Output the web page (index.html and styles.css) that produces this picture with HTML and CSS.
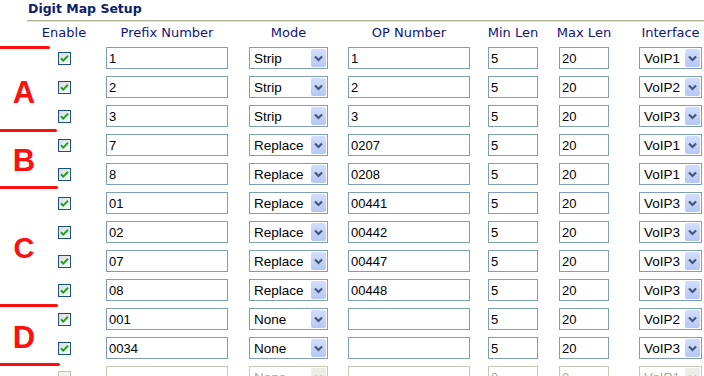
FILE: index.html
```html
<!DOCTYPE html>
<html lang="en">
<head>
    <meta charset="UTF-8">
    <meta name="viewport" content="width=device-width, initial-scale=1.0">
    <title>Digit Map Setup</title>
    <link rel="stylesheet" href="styles.css">
</head>
<body>
    <div class="page">
        <h2 class="title">Digit Map Setup</h2>

        <div class="head">
            <div>Enable</div>
            <div>Prefix Number</div>
            <div>Mode</div>
            <div>OP Number</div>
            <div>Min Len</div>
            <div>Max Len</div>
            <div class="last">Interface</div>
        </div>

        <div id="mapRows"></div>

        <!-- hand drawn notes over the table -->
        <div class="mark line1"></div>
        <div class="mark line2"></div>
        <div class="mark line3"></div>
        <div class="mark line4"></div>
        <div class="mark line5"></div>
        <div class="letter let-a">A</div>
        <div class="letter let-b">B</div>
        <div class="letter let-c">C</div>
        <div class="letter let-d">D</div>
    </div>

    <script>
        let rows = [
            ['1', 'Strip', '1', '5', '20', 'VoIP1'],
            ['2', 'Strip', '2', '5', '20', 'VoIP2'],
            ['3', 'Strip', '3', '5', '20', 'VoIP3'],
            ['7', 'Replace', '0207', '5', '20', 'VoIP1'],
            ['8', 'Replace', '0208', '5', '20', 'VoIP1'],
            ['01', 'Replace', '00441', '5', '20', 'VoIP3'],
            ['02', 'Replace', '00442', '5', '20', 'VoIP3'],
            ['07', 'Replace', '00447', '5', '20', 'VoIP3'],
            ['08', 'Replace', '00448', '5', '20', 'VoIP3'],
            ['001', 'None', '', '5', '20', 'VoIP2'],
            ['0034', 'None', '', '5', '20', 'VoIP3'],
            ['', 'None', '', '0', '0', 'VoIP1', true]
        ];

        let chevron = '<svg width="15" height="18" viewBox="0 0 15 18"><path d="M4 7.5 L7.5 11 L11 7.5" fill="none" stroke="currentColor" stroke-width="2.2"/></svg>';
        let tick = '<svg width="13" height="13" viewBox="0 0 13 13"><path d="M3 6.2 L5.2 8.6 L10 3.8" fill="none" stroke="#21a121" stroke-width="2"/></svg>';

        function sel(text, cls) {
            return `<div class="sel ${cls}"><span class="sel-text">${text}</span><span class="sel-btn">${chevron}</span></div>`;
        }

        let box = document.getElementById('mapRows');
        rows.forEach(r => {
            let off = r[6] ? ' off' : '';
            box.innerHTML += `<div class="row${off}">
                <div><span class="check">${r[6] ? '' : tick}</span></div>
                <div><input class="txt wide" type="text" value="${r[0]}"></div>
                <div>${sel(r[1], 'mode')}</div>
                <div><input class="txt wide" type="text" value="${r[2]}"></div>
                <div><input class="txt short" type="text" value="${r[3]}"></div>
                <div><input class="txt short" type="text" value="${r[4]}"></div>
                <div class="last">${sel(r[5], 'iface')}</div>
            </div>`;
        });
    </script>
</body>
</html>
```

FILE: styles.css
```css
body { margin: 0; background: #fff; font-family: "Liberation Sans", Arial, sans-serif; }
.page { position: relative; width: 704px; height: 376px; overflow: hidden; }

.title { margin: 0 0 0 27px; padding: 1px 0 3px 1px; font: bold 12.5px/16px "DejaVu Sans", Verdana, sans-serif; color: #0c1d6b; border-bottom: 1px solid #b2b29c; box-shadow: 0 1px 0 #e2e2d6; }

.head, .row { display: grid; grid-template-columns: 74px 132px 111px 130px 78px 64px 88px; margin-left: 27px; }
.head { height: 23px; font: 13px/23px "DejaVu Sans", Verdana, sans-serif; color: #10137a; text-align: center; }
.head .last, .row .last { padding: 0 2px 0 23px; }

.row { height: 29px; }
.row > div { display: flex; justify-content: center; align-items: flex-start; }

.check { display: block; width: 13px; height: 13px; margin-top: 8px; box-sizing: border-box; border: 1px solid #1c5180; background: linear-gradient(135deg, #dcdcd6, #fbfbf9); }
.check svg { display: block; margin: -1px; }

.txt { box-sizing: border-box; height: 22px; margin: 3px 0 0; padding: 0 2px; border: 1px solid #7f9db9; font: 13px "Liberation Sans", Arial, sans-serif; color: #000; background: #fff; }
.wide { width: 122px; }
.short { width: 50px; }

.sel { box-sizing: border-box; display: flex; align-items: center; height: 22px; margin-top: 3px; padding: 1px; border: 1px solid #7f9db9; background: #fff; font-size: 13.5px; color: #000; }
.sel.mode { width: 79px; }
.sel.iface { width: 63px; }
.sel-text { flex: 1; padding-left: 3px; white-space: nowrap; overflow: hidden; }
.sel-btn { display: block; width: 15px; height: 18px; border-radius: 2px; background: linear-gradient(#d2defc, #b4c7f5); color: #44587e; }
.sel-btn svg { display: block; }

.off .check { border-color: #c4c3b8; background: #f2f1ea; }
.off .txt, .off .sel { border-color: #c9c7ba; color: #aca899; }
.off .sel-btn { background: #eeede5; color: #c9c7ba; }

.mark { position: absolute; left: 0; height: 3px; background: #ff1010; border-radius: 0 2px 2px 0; }
.line1 { top: 46px; width: 50px; }
.line2 { top: 129px; width: 57px; }
.line3 { top: 186px; width: 58px; }
.line4 { top: 304px; width: 58px; }
.line5 { top: 363px; width: 60px; }

.letter { position: absolute; left: 0; width: 48px; text-align: center; font: bold 31px/32px "Liberation Sans", Arial, sans-serif; color: #ff1010; }
.let-a { top: 77px; }
.let-b { top: 145px; }
.let-c { top: 232px; font-size: 29px; }
.let-d { top: 322px; }
```
